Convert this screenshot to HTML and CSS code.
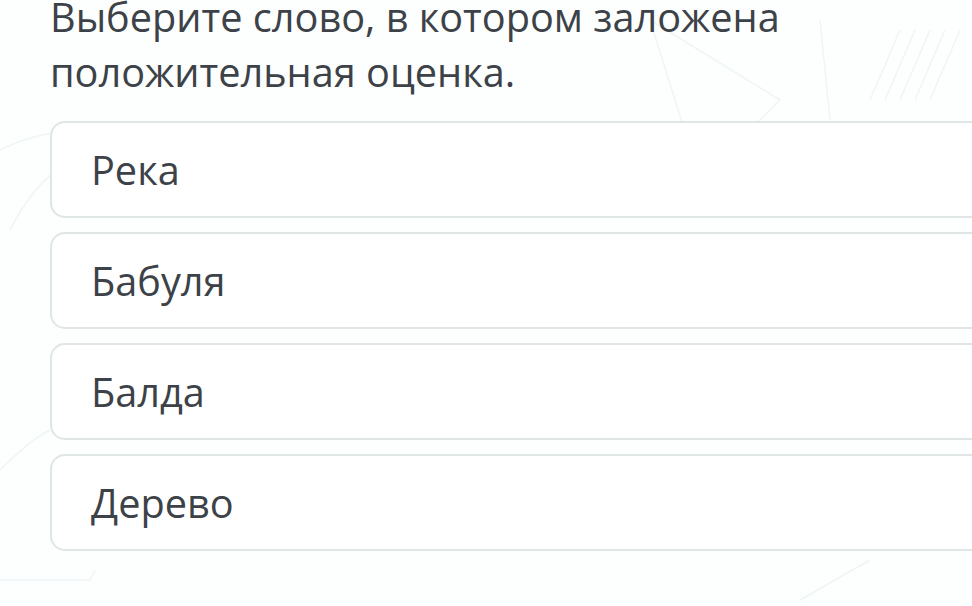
FILE: index.html
```html
<!DOCTYPE html>
<html lang="ru">
<head>
<meta charset="utf-8">
<link rel="stylesheet" href="styles.css">
</head>
<body>
<div class="page">
  <svg class="doodles" width="972" height="606" viewBox="0 0 972 606" aria-hidden="true">
    <g fill="none" stroke="#eef5f7" stroke-width="1.5">
      <path d="M0 150 Q60 120 120 140"/>
      <path d="M10 230 Q40 170 90 150"/>
      <path d="M650 20 L780 100 L700 180 Z"/>
      <path d="M820 20 L830 120"/>
      <path d="M870 100 L900 30 M885 100 L915 30 M900 100 L930 30 M915 100 L945 30 M930 100 L960 30"/>
      <path d="M0 470 Q30 440 50 430"/>
      <path d="M0 580 L90 580 L95 570"/>
      <path d="M800 600 L870 560"/>
    </g>
  </svg>
  <div class="content">
    <h1 class="question">Выберите слово, в котором заложена положительная оценка.</h1>
    <ul class="options">
      <li class="option">Река</li>
      <li class="option">Бабуля</li>
      <li class="option">Балда</li>
      <li class="option">Дерево</li>
    </ul>
  </div>
</div>
</body>
</html>
```

FILE: styles.css
```css
html, body {
  margin: 0;
  padding: 0;
  background: #fdfefe;
  overflow: hidden;
}
.page {
  position: relative;
  width: 972px;
  height: 606px;
  overflow: hidden;
  font-family: "Open Sans", "Noto Sans", sans-serif;
  color: #3c4247;
}
.doodles {
  position: absolute;
  left: 0;
  top: 0;
}
.content {
  position: relative;
  padding-left: 50px;
  width: 1000px;
}
.question {
  margin: -10px 0 0 0;
  font-size: 39.7px;
  font-weight: 400;
  line-height: 55px;
  width: 800px;
  color: #3c4247;
}
.options {
  list-style: none;
  margin: 21px 0 0 0;
  padding: 0;
  display: flex;
  flex-direction: column;
  gap: 14px;
}
.option {
  box-sizing: border-box;
  height: 97px;
  border: 2px solid #e0e5e5;
  border-radius: 15px;
  background: #ffffff;
  padding-left: 39px;
  display: flex;
  align-items: center;
  font-size: 39.7px;
  color: #3c4247;
}
```
